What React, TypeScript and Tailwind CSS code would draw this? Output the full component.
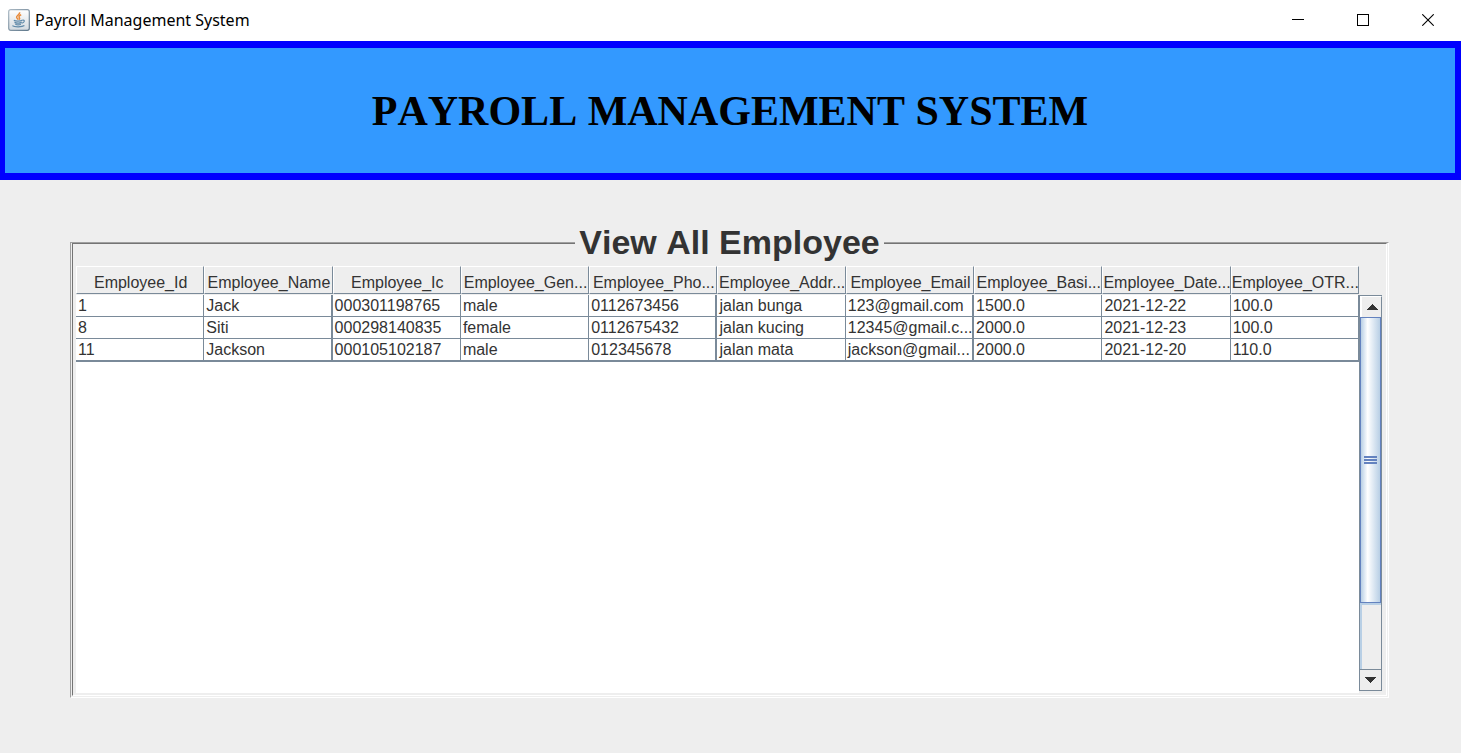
import React from 'react';

const columns = [
  'Employee_Id',
  'Employee_Name',
  'Employee_Ic',
  'Employee_Gen...',
  'Employee_Pho...',
  'Employee_Addr...',
  'Employee_Email',
  'Employee_Basi...',
  'Employee_Date...',
  'Employee_OTR...',
];

const rows = [
  ['1', 'Jack', '000301198765', 'male', '0112673456', 'jalan bunga', '123@gmail.com', '1500.0', '2021-12-22', '100.0'],
  ['8', 'Siti', '000298140835', 'female', '0112675432', 'jalan kucing', '12345@gmail.c...', '2000.0', '2021-12-23', '100.0'],
  ['11', 'Jackson', '000105102187', 'male', '012345678', 'jalan mata', 'jackson@gmail...', '2000.0', '2021-12-20', '110.0'],
];

// Columns whose right grid line is drawn two pixels wide.
const thickLines = [1, 4, 6];

function JavaIcon() {
  return (
    <svg width="22" height="22" viewBox="0 0 22 22" aria-hidden="true">
      <defs>
        <linearGradient id="tile" x1="0" y1="0" x2="0" y2="1">
          <stop offset="0" stopColor="#ffffff" />
          <stop offset="1" stopColor="#d3dae0" />
        </linearGradient>
        <linearGradient id="edge" x1="0" y1="0" x2="1" y2="1">
          <stop offset="0" stopColor="#a9b7c2" />
          <stop offset="1" stopColor="#5f788c" />
        </linearGradient>
      </defs>
      <rect x="0.7" y="0.7" width="20.6" height="20.6" rx="2" fill="url(#tile)" stroke="url(#edge)" strokeWidth="1.2" />
      <path d="M11.600 3.200c.8 2.200-3.600 3.200-3 5.200.3 1 1.300 1.400 1.700 2.200M13.200 5.800c-2 .8-2.800 1.800-1.800 3 .5.7.3 1.200-.3 1.800" fill="none" stroke="#e98b3a" strokeWidth="1.500" />
      <path d="M5.800 11.400c1.700.9 6.500.9 8.400 0M6.500 13.400c1.700.8 5.400.8 7.200 0M7.300 15.300c1.500.6 4.200.6 5.600 0M14.400 11.200c2.800-.5 2.400 2.300-.6 3M4.400 16.600c1.800 1.700 9.800 1.600 12 0" fill="none" stroke="#5f89a8" strokeWidth="1.200" />
    </svg>
  );
}

function TitleBar() {
  return (
    <header className="flex h-[41px] items-start bg-white">
      <div className="flex h-10 flex-1 items-center gap-[5px] pl-2">
        <JavaIcon />
        <span className="font-['Noto_Sans',sans-serif] text-[16px] leading-6 text-black">Payroll Management System</span>
      </div>
      <button aria-label="Minimize" className="grid h-10 w-[65px] place-items-center">
        <svg width="12" height="12" viewBox="0 0 12 12" shapeRendering="crispEdges"><path d="M0 5.500h12" stroke="#000" /></svg>
      </button>
      <button aria-label="Maximize" className="grid h-10 w-[65px] place-items-center">
        <svg width="12" height="12" viewBox="0 0 12 12" shapeRendering="crispEdges"><path d="M.5.5h11v11H.5z" fill="none" stroke="#000" /></svg>
      </button>
      <button aria-label="Close" className="grid h-10 w-[66px] place-items-center">
        <svg width="12" height="12" viewBox="0 0 12 12"><path d="M.3.3l11.400 11.400M11.700.3L.3 11.700" stroke="#000" strokeWidth="1.100" /></svg>
      </button>
    </header>
  );
}

function EmployeeTable() {
  return (
    <table className="w-full table-fixed border-separate border-spacing-0 text-[16px] text-[#333]">
      <thead>
        <tr>
          {columns.map((name) => (
            <th key={name} scope="col" className="h-[29px] overflow-hidden whitespace-nowrap border-b border-b-[#eee] bg-[#eee] p-0 font-normal">
              <div className="flex h-7 items-center justify-center overflow-hidden border-b border-l border-r border-t border-b-[#7a8a99] border-l-white border-r-[#7a8a99] border-t-white pl-px pt-[6px] leading-5">
                {name}
              </div>
            </th>
          ))}
        </tr>
      </thead>
      <tbody className="bg-white">
        {rows.map((row) => (
          <tr key={row[0]}>
            {row.map((value, i) => (
              <td
                key={i}
                className={`h-[22px] overflow-hidden whitespace-nowrap border-b border-[#7a8a99] p-0 pl-[2px] pt-px leading-5 ${thickLines.includes(i) ? 'border-r-2' : 'border-r'}`}
              >
                {value}
              </td>
            ))}
          </tr>
        ))}
      </tbody>
    </table>
  );
}

function ScrollBar() {
  return (
    <div className="mb-[2px] mt-[29px] flex w-[23px] flex-col border-l border-t border-[#7a8a99] bg-[#eee]">
      <button aria-label="Scroll up" className="grid h-[21px] place-items-center border-l-2 border-r border-t border-l-white border-r-[#7a8a99] border-t-white">
        <svg width="12" height="6" viewBox="0 0 12 6" shapeRendering="crispEdges"><path d="M6 0l6 6H0z" fill="#333" /></svg>
      </button>
      <div className="flex flex-1 flex-col border-r border-[#7a8a99]">
        <div className="grid flex-[287] place-items-center border border-[#6382bf] bg-linear-to-r from-[#b8cfe5] via-white via-35% to-[#b8cfe5]">
          <div className="flex w-[13px] flex-col gap-px">
            <span className="h-[2px] bg-[#6382bf]" />
            <span className="h-[2px] bg-[#6382bf]" />
            <span className="h-[2px] bg-[#6382bf]" />
          </div>
        </div>
        <div className="flex-[65] border-l-2 border-t-2 border-[#b8cfe5]" />
      </div>
      <button aria-label="Scroll down" className="grid h-[22px] place-items-center border-b border-r border-t border-[#7a8a99]">
        <svg width="13" height="6" viewBox="0 0 13 6" shapeRendering="crispEdges"><path d="M0 0h13L6.500 6z" fill="#333" /></svg>
      </button>
    </div>
  );
}

export default function App() {
  return (
    <div className="flex min-h-screen flex-col bg-[#eee] font-['Liberation_Sans',Arial,sans-serif]">
      <TitleBar />
      <div className="flex h-[139px] items-center justify-center border-y-[7px] border-l-[5px] border-r-[6px] border-[#00f] bg-[#39f]">
        <h1 className="font-['Liberation_Serif',serif] text-[42px] font-bold leading-[48px] text-black [font-kerning:none]">
          PAYROLL MANAGEMENT SYSTEM
        </h1>
      </div>
      <main className="flex flex-1 flex-col pb-[55px] pl-[70px] pr-[72px] pt-10">
        <div className="flex">
          <div className="mt-[22px] flex-1 border-l border-t border-[#a0a0a0]">
            <div className="ml-px h-full border-l border-t border-[#747474]" />
          </div>
          <h2 className="px-1 text-[34px] font-bold leading-[44px] text-[#333] [font-kerning:none]">View All Employee</h2>
          <div className="mt-[22px] flex-1 border-r border-t border-r-white border-t-[#a0a0a0]">
            <div className="mr-px h-full border-r border-t border-r-white border-t-[#747474]" />
          </div>
        </div>
        <div className="flex flex-1 border-b border-l border-r border-b-white border-l-[#a0a0a0] border-r-white">
          <div className="mx-px mb-px flex flex-1 border-b border-l border-r border-b-white border-l-[#747474] border-r-white pb-[2px] pl-[3px] pr-1 pt-[2px]">
            <div className="flex min-w-0 flex-1 flex-col">
              <EmployeeTable />
              <div className="flex-1 border-t border-[#7a8a99] bg-white" />
            </div>
            <ScrollBar />
          </div>
        </div>
      </main>
    </div>
  );
}
